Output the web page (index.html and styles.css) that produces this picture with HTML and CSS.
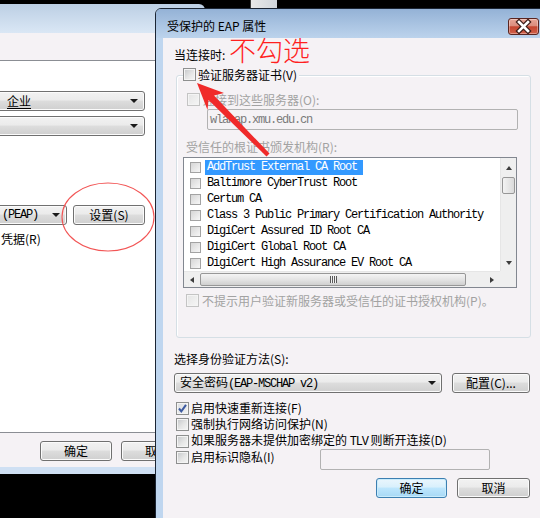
FILE: index.html
```html
<!DOCTYPE html>
<html lang="zh-CN">
<head>
<meta charset="utf-8">
<title>受保护的 EAP 属性</title>
<link rel="stylesheet" href="styles.css">
</head>
<body>
<div class="desk">
  <div class="stub"></div>

  <div class="back">
    <div class="title"></div>
    <div class="tabs"></div>
    <div class="pane">
      <div class="combo c1"><span class="u">企业</span><i class="arr"></i></div>
      <div class="combo c2"><i class="arr"></i></div>
      <div class="row3">
        <div class="combo c3"><span class="mono">(PEAP)</span><i class="arr"></i></div>
        <div class="btn set">设置(S)</div>
      </div>
      <div class="cred">凭据(R)</div>
    </div>
    <div class="foot">
      <div class="btn fb">确定</div>
      <div class="btn fb">取消</div>
    </div>
    <div class="band"></div>
  </div>

  <div class="dlg">
    <div class="dtitle">
      <span class="dname">受保护的 EAP 属性</span>
      <div class="close">
        <svg width="29" height="15" viewBox="0 0 29 15">
          <path d="M10 3 L19 12 M19 3 L10 12" stroke="#3b1c18" stroke-width="5" stroke-linecap="square" fill="none"/>
          <path d="M10 3 L19 12 M19 3 L10 12" stroke="#ffffff" stroke-width="2.6" stroke-linecap="square" fill="none"/>
        </svg>
      </div>
    </div>
    <div class="body">
      <div class="lbl">当连接时:</div>
      <div class="grp">
        <div class="legend"><span class="cb"></span><span>验证服务器证书(V)</span></div>
        <div class="r2"><span class="cb dis"></span><span class="gray">连接到这些服务器(O):</span></div>
        <div class="inp dis"><span class="mono">wlanap.xmu.edu.cn</span></div>
        <div class="lbl3 gray">受信任的根证书颁发机构(R):</div>
        <div class="list">
          <div class="rows">
            <div class="item"><span class="lcb"></span><span class="it sel mono">AddTrust External CA Root</span></div>
            <div class="item"><span class="lcb"></span><span class="it mono">Baltimore CyberTrust Root</span></div>
            <div class="item"><span class="lcb"></span><span class="it mono">Certum CA</span></div>
            <div class="item"><span class="lcb"></span><span class="it mono">Class 3 Public Primary Certification Authority</span></div>
            <div class="item"><span class="lcb"></span><span class="it mono">DigiCert Assured ID Root CA</span></div>
            <div class="item"><span class="lcb"></span><span class="it mono">DigiCert Global Root CA</span></div>
            <div class="item"><span class="lcb"></span><span class="it mono">DigiCert High Assurance EV Root CA</span></div>
          </div>
          <div class="vs">
            <span class="vbtn up"><i class="tri tu"></i></span>
            <span class="vthumb"></span>
            <span class="vspace"></span>
            <span class="vbtn dn"><i class="tri td"></i></span>
          </div>
          <div class="hs">
            <span class="hbtn"><i class="tri tl"></i></span>
            <span class="hthumb"><i class="grip"></i></span>
            <span class="hspace"></span>
            <span class="hbtn"><i class="tri tr"></i></span>
          </div>
          <div class="corner"></div>
        </div>
        <div class="r4"><span class="cb dis"></span><span class="gray">不提示用户验证新服务器或受信任的证书授权机构(P)。</span></div>
      </div>

      <div class="lbl4">选择身份验证方法(S):</div>
      <div class="crow">
        <div class="combo wide"><span class="ctext">安全密码<span class="mono">(EAP-MSCHAP v2)</span></span><i class="arr"></i></div>
        <div class="btn cfg">配置(C)...</div>
      </div>

      <div class="opts">
        <div class="opt"><span class="cb on"><svg width="11" height="11" viewBox="0 0 11 11"><path d="M2 5.5 L4.3 8.3 L9 1.8" stroke="#3d5aa0" stroke-width="2" fill="none"/></svg></span><span>启用快速重新连接(F)</span></div>
        <div class="opt"><span class="cb"></span><span>强制执行网络访问保护(N)</span></div>
        <div class="opt o3"><span class="cb"></span><span>如果服务器未提供加密绑定的 <span class="mono">TLV</span> 则断开连接(D)</span></div>
        <div class="opt o4"><span class="cb"></span><span class="o4lbl">启用标识隐私(I)</span><div class="inp2"></div></div>
      </div>

      <div class="brow">
        <div class="btn def ok">确定</div>
        <div class="btn cancel">取消</div>
      </div>
    </div>
  </div>

  <div class="note">不勾选</div>
  <svg class="ink" width="540" height="518" viewBox="0 0 540 518">
    <ellipse cx="108" cy="217" rx="46" ry="34" fill="none" stroke="#f25555" stroke-width="1.1"/>
    <polygon points="197,83 224,93 214,95.5 269.5,153.5 266.5,156.5 208.5,100 207.5,110" fill="#f02a2a"/>
  </svg>
</div>
</body>
</html>
```

FILE: styles.css
```css
* { box-sizing: border-box; }
html, body { margin: 0; padding: 0; }
body {
  width: 540px;
  height: 518px;
  overflow: hidden;
  background: #000;
  font-family: "Noto Sans CJK SC", "Noto Sans", sans-serif;
  font-size: 12px;
  color: #000;
}
.desk { position: relative; width: 540px; height: 518px; overflow: hidden; }

.mono {
  font-family: "Liberation Mono", "Noto Sans CJK SC", monospace;
  font-size: 12px;
  letter-spacing: -1.2px;
}
.gray { color: #a2a2a2; }

/* ---------- windows on the desktop ---------- */
.stub {
  position: absolute; left: 250px; top: 0; width: 27px; height: 8px;
  background: linear-gradient(90deg, #e9e9e9, #d0d5db);
  border-left: 1px solid #3a3a3a;
}

.back {
  position: absolute; left: 0; top: 4px; width: 205px; height: 470px;
  display: flex; flex-direction: column;
  border-radius: 0 6px 0 0; overflow: hidden;
}
.back .title { flex: none; height: 29px; background: linear-gradient(#bccfe4, #dae7f5); }
.back .tabs { flex: none; height: 28px; background: #f5f2f5; border-bottom: 1px solid #8b8e94; }
.back .pane {
  flex: none; height: 372px; background: #fff; border-bottom: 1px solid #8b8e94;
  padding-top: 30px; display: flex; flex-direction: column; align-items: flex-start;
}
.back .foot { flex: none; height: 34px; background: #f5f2f5; padding: 8px 0 0 40px; display: flex; gap: 9px; }
.back .band { flex: none; height: 7px; background: #cfe0f3; }

.btn {
  height: 20px; border: 1px solid #707070; border-radius: 3px;
  background: linear-gradient(#f2f2f2 0%, #ebebeb 45%, #dddddd 50%, #cfcfcf 100%);
  box-shadow: inset 0 0 0 1px #fbfbfb;
  display: flex; align-items: center; justify-content: center;
  line-height: 14px; flex: none;
}
.btn.def {
  border-color: #3c7fb1;
  background: linear-gradient(#eaf6fd 0%, #d9f0fc 45%, #bee6fd 50%, #a7d9f5 100%);
  box-shadow: inset 0 0 0 1px #c9ecfc;
}
.combo {
  height: 20px; border: 1px solid #707070; border-radius: 3px;
  background: linear-gradient(#f2f2f2 0%, #ebebeb 45%, #dddddd 50%, #cfcfcf 100%);
  box-shadow: inset 0 0 0 1px #fbfbfb;
  display: flex; align-items: center; justify-content: space-between;
  line-height: 14px; flex: none;
}
.arr {
  width: 0; height: 0; flex: none;
  border-left: 4px solid transparent; border-right: 4px solid transparent;
  border-top: 4px solid #1a1a1a;
}
.c1 { margin-left: -10px; width: 155px; padding: 0 6px 0 16px; }
.c1 .u { text-decoration: underline; text-underline-offset: 2px; }
.c2 { margin-left: -10px; width: 155px; margin-top: 5px; padding: 0 6px 0 16px; justify-content: flex-end; }
.row3 { display: flex; gap: 6px; margin-top: 69px; margin-left: -40px; }
.c3 { width: 107px; padding: 0 6px 0 41px; }
.set { width: 72px; }
.cred { margin-top: 7px; margin-left: 1px; line-height: 14px; }
.fb { width: 72px; }

/* ---------- front dialog ---------- */
.dlg {
  position: absolute; left: 155px; top: 8px; width: 394px; height: 530px;
  border: 1px solid #1b2534; border-radius: 6px 6px 0 0;
  background: #bfd6ef;
  display: flex; flex-direction: column;
}
.dtitle {
  flex: none; height: 29px; display: flex; padding-left: 11px;
  background: linear-gradient(#94b2d6, #bcd3ec);
  border-radius: 5px 5px 0 0;
}
.dname { flex: 1; padding-top: 10px; line-height: 14px; }
.close {
  flex: none; width: 31px; height: 17px; margin: 9px 9px 0 0;
  border: 1px solid #5a2520; border-radius: 3px;
  background: linear-gradient(#e8a697 0%, #db8d7d 45%, #c5452f 52%, #d0604a 100%);
  box-shadow: inset 0 0 0 1px rgba(255, 255, 255, 0.35);
  display: flex; align-items: center; justify-content: center;
}
.close svg { display: block; }

.body {
  flex: 1; margin: 0 7px; background: #f5f2f5;
  display: flex; flex-direction: column; align-items: flex-start;
  padding-left: 11px;
}
.lbl { margin-top: 10px; line-height: 14px; }

.grp {
  margin: 13px 0 0 2px; width: 355px; height: 263px;
  border: 1px solid #d5dfe5; border-radius: 3px;
  box-shadow: inset 1px 1px 0 #ffffff;
  display: flex; flex-direction: column; align-items: flex-start;
}
.cb {
  width: 13px; height: 13px; flex: none; display: block;
  border: 1px solid #8e8f8f;
  background: linear-gradient(135deg, #c4c6c9 0%, #e6e6e6 55%, #f6f6f6 100%);
  box-shadow: inset 0 0 0 1px #f4f4f4;
}
.cb.dis {
  border-color: #c4c4c4;
  background: linear-gradient(135deg, #e4e4e4, #f6f6f6);
}
.cb.on { background: linear-gradient(135deg, #dcdee2 0%, #f2f2f2 100%); }
.cb svg { display: block; }
.legend {
  margin: -8px 0 0 6px; padding-right: 2px; background: #f5f2f5;
  display: flex; align-items: center; gap: 2px; height: 13px; line-height: 13px;
}
.r2 { margin: 12px 0 0 10px; display: flex; align-items: center; gap: 3px; height: 13px; line-height: 13px; }
.inp {
  margin: 3px 0 0 30px; width: 311px; height: 21px;
  border: 1px solid #b2b2b2; border-radius: 2px; background: #f5f2f5;
  display: flex; align-items: center; padding-left: 2px; color: #7a7a7a;
}
.lbl3 { margin: 10px 0 0 9px; line-height: 14px; }
.list {
  margin: 3px 0 0 6px; width: 334px; height: 131px;
  border: 1px solid #828790; background: #fff;
  display: grid; grid-template-columns: 316px 16px; grid-template-rows: 113px 16px;
}
.rows { padding-top: 1px; overflow: hidden; }
.item { height: 16px; display: flex; align-items: center; padding-left: 6px; white-space: nowrap; }
.lcb {
  width: 11px; height: 11px; flex: none; margin-right: 4px;
  border: 1px solid #a3a3a3;
  background: linear-gradient(135deg, #d6d6d6, #f7f7f7);
}
.it { height: 15px; line-height: 15px; padding: 0 2px; }
.it.sel { background: #3399ff; color: #fff; padding-right: 6px; }

.vs { display: flex; flex-direction: column; background: #efefef; border-left: 1px solid #e6e6e6; }
.vbtn { display: flex; align-items: center; justify-content: center; flex: none; }
.vbtn.up { height: 19px; }
.vbtn.dn { height: 17px; }
.vthumb {
  flex: none; height: 17px; margin: 0 1px;
  border: 1px solid #979797; border-radius: 2px;
  background: linear-gradient(90deg, #f3f3f3, #dadada);
}
.vspace { flex: 1; }
.hs { display: flex; background: #efefef; border-top: 1px solid #e6e6e6; }
.hbtn { width: 16px; flex: none; display: flex; align-items: center; justify-content: center; }
.hthumb {
  width: 266px; flex: none; margin: 1px 0;
  border: 1px solid #979797; border-radius: 2px;
  background: linear-gradient(#f4f4f4 0%, #e4e4e4 50%, #cfcfcf 100%);
  display: flex; align-items: center; justify-content: center;
}
.grip {
  width: 7px; height: 7px;
  background: repeating-linear-gradient(90deg, #5a5a5a 0 1px, #f2f2f2 1px 2px);
}
.hspace { flex: 1; }
.corner { background: #efefef; }
.tri { width: 0; height: 0; display: block; }
.tu { border-left: 3.5px solid transparent; border-right: 3.5px solid transparent; border-bottom: 4px solid #3c3c3c; }
.td { border-left: 3.5px solid transparent; border-right: 3.5px solid transparent; border-top: 4px solid #3c3c3c; }
.tl { border-top: 3.5px solid transparent; border-bottom: 3.5px solid transparent; border-right: 4px solid #3c3c3c; }
.tr { border-top: 3.5px solid transparent; border-bottom: 3.5px solid transparent; border-left: 4px solid #3c3c3c; }

.r4 { margin: 6px 0 0 9px; display: flex; align-items: center; gap: 3px; height: 13px; line-height: 13px; }

.lbl4 { margin-top: 14px; line-height: 14px; }
.crow { margin-top: 7px; display: flex; gap: 10px; }
.wide { width: 268px; padding: 0 5px; }
.cfg { width: 78px; }

.opts { margin: 7px 0 0 2px; display: flex; flex-direction: column; }
.opt { height: 16px; display: flex; align-items: center; gap: 2px; line-height: 14px; }
.opt.o3 { margin-top: 1px; }
.opt.o4 { height: 21px; align-items: flex-start; }
.o4 .cb { margin-top: 2px; }
.o4lbl { width: 127px; flex: none; margin-top: 1px; }
.inp2 {
  width: 170px; height: 21px; flex: none;
  border: 1px solid #b2b2b2; border-radius: 2px; background: #f5f2f5;
}

.brow { align-self: stretch; margin-top: 8px; display: flex; justify-content: flex-end; gap: 10px; padding-right: 11px; }
.ok { width: 71px; }
.cancel { width: 73px; }

/* ---------- annotations over the screenshot ---------- */
.note {
  position: absolute; left: 229px; top: 36px;
  font-family: "Noto Sans CJK SC", sans-serif; font-weight: 300;
  font-size: 27px; line-height: 27px; color: #ff1f1f;
}
.ink { position: absolute; left: 0; top: 0; pointer-events: none; }
```
